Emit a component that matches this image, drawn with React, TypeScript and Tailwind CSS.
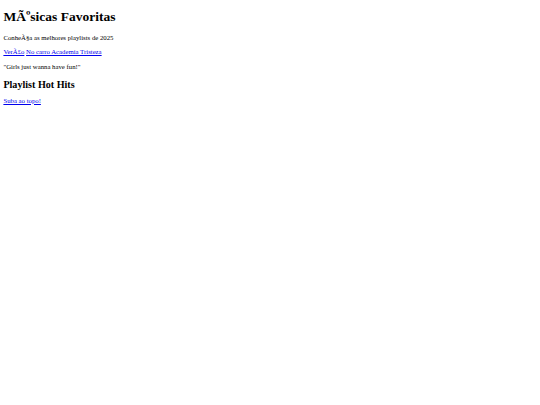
import React from 'react';

export default function App() {
  return (
    <div className="min-h-[405px] bg-white px-[3.4px] font-['Liberation_Serif',serif] text-black">
      <h1 className="my-[9px] text-[13.5px] leading-[1.15] font-bold">MÃºsicas Favoritas</h1>
      <p className="my-[6.75px] text-[6.75px] leading-[1.15]">ConheÃ§a as melhores playlists de 2025</p>
      <p className="my-[6.75px] text-[6.75px] leading-[1.15]">
        <a href="#" className="text-[#0000ee] underline">VerÃ£o</a>{' '}
        <a href="#" className="text-[#0000ee] underline">No carro Academia Tristeza</a>
      </p>
      <p className="my-[6.75px] text-[6.75px] leading-[1.15]">"Girls just wanna have fun!"</p>
      <h2 className="mt-[8.4px] mb-[6.5px] text-[10.1px] leading-[1.15] font-bold">Playlist Hot Hits</h2>
      <p className="my-[6.5px] text-[6.75px] leading-[1.15]">
        <a href="#" className="text-[#0000ee] underline">Suba ao topo!</a>
      </p>
    </div>
  );
}
